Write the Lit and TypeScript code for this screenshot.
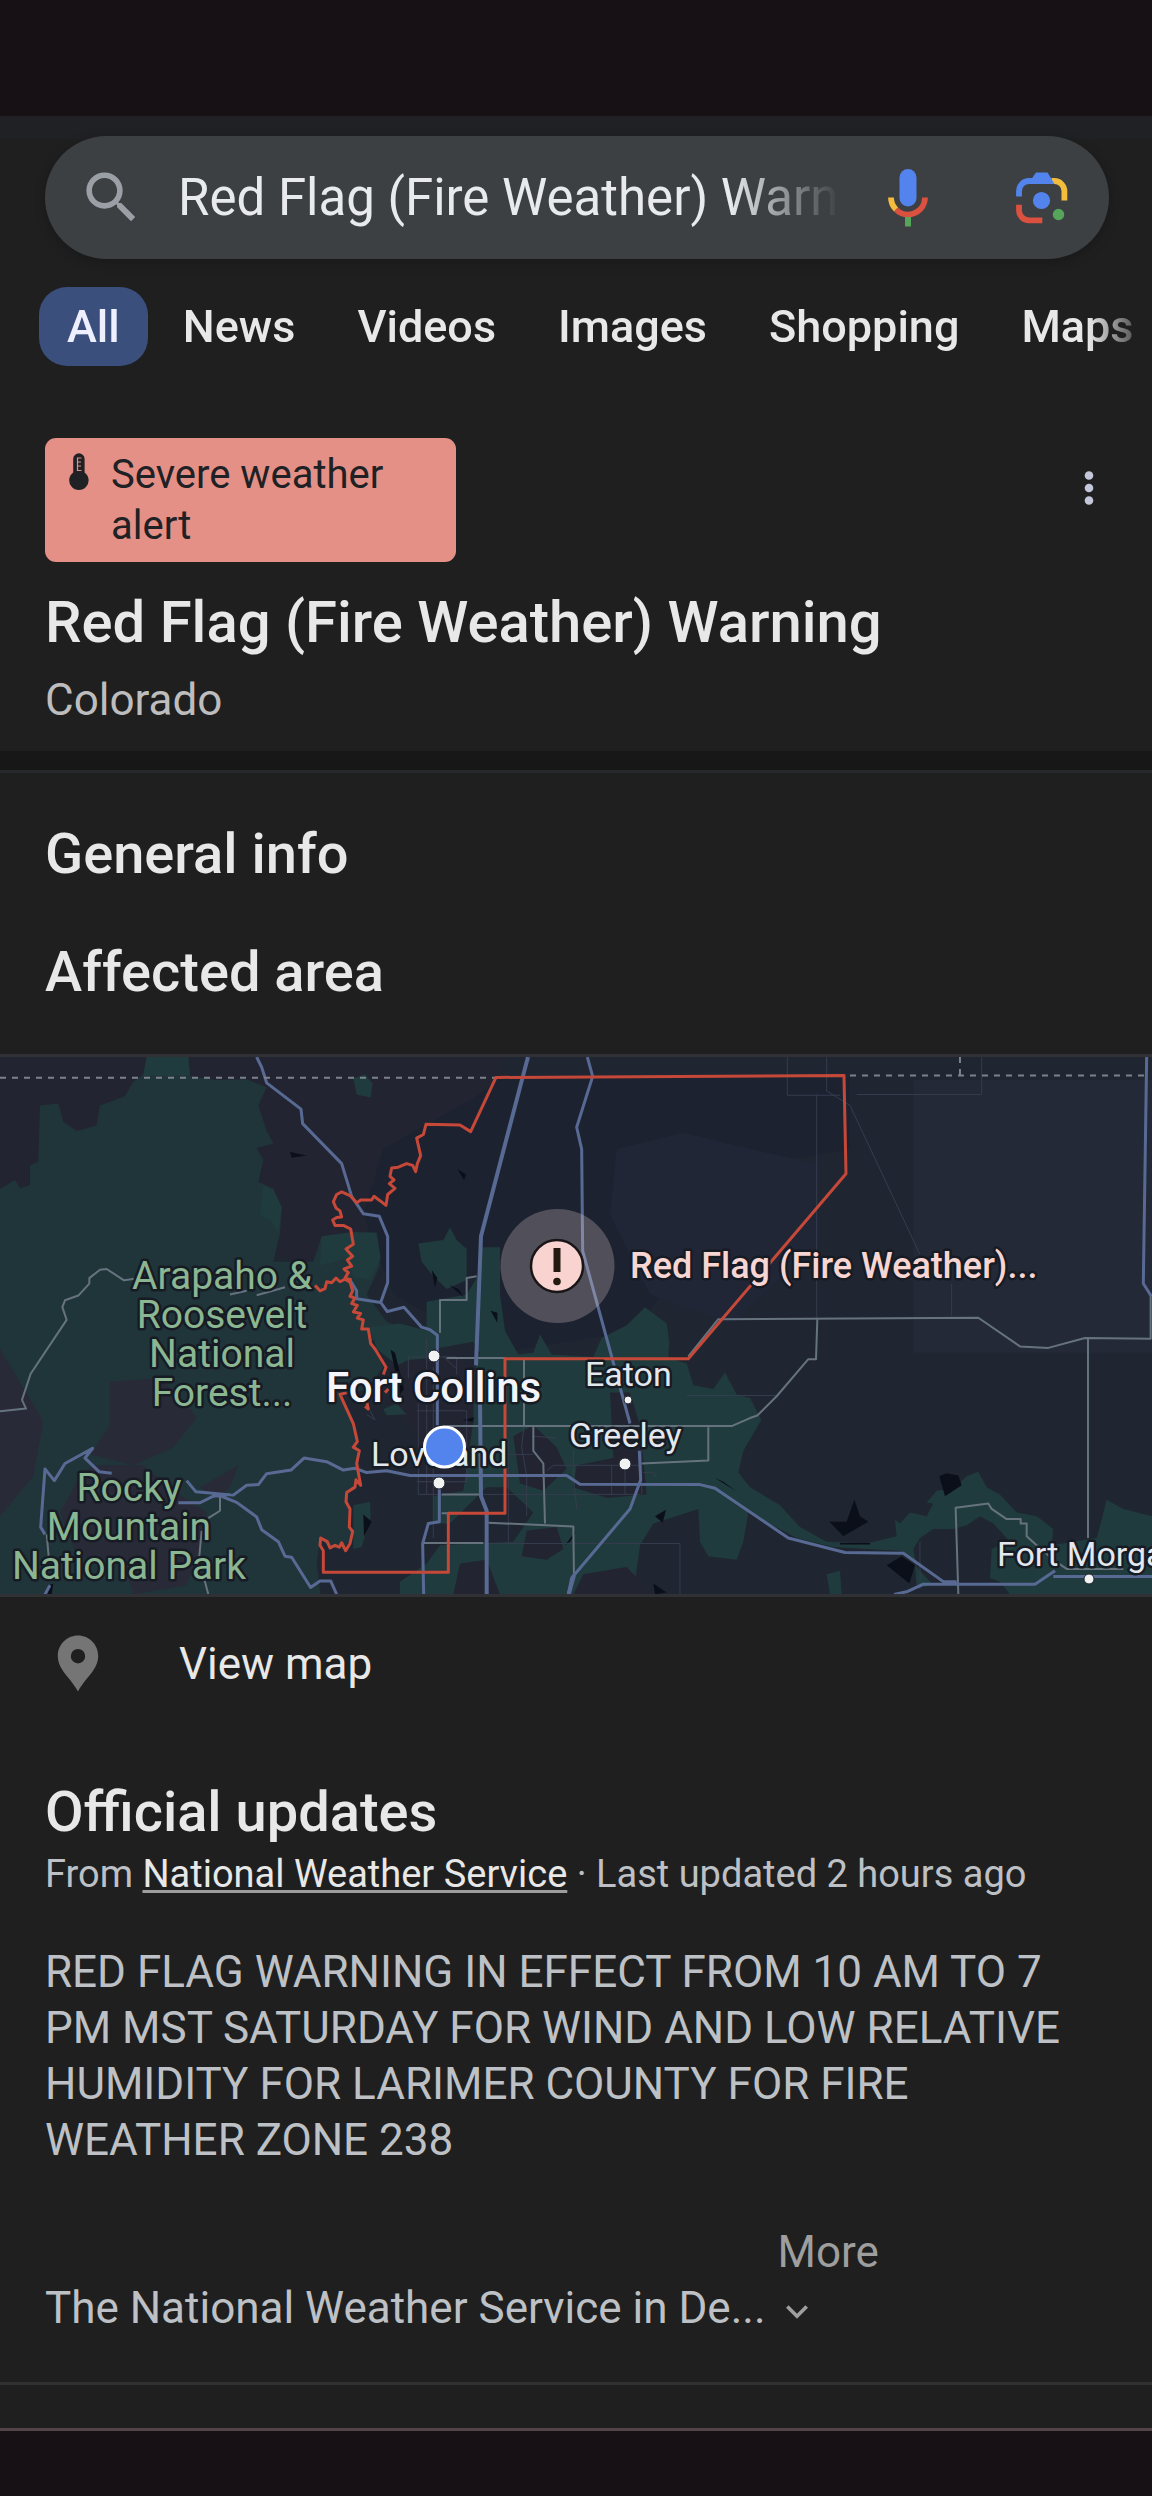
import { LitElement, html, css, svg } from "lit";
import { customElement, state } from "lit/decorators.js";

const TABS = ["All", "News", "Videos", "Images", "Shopping", "Maps"];

@customElement("search-header")
export class SearchHeader extends LitElement {
  static styles = css`
    :host {
      display: block;
      background: linear-gradient(#202124 23px, #1f1f1f 23px);
      padding-top: 20px;
    }
    .pill {
      display: flex;
      align-items: center;
      height: 123px;
      margin: 0 43px 0 45px;
      padding: 0 31px 0 33px;
      box-sizing: border-box;
      border-radius: 62px;
      background: #3c4043;
      box-shadow: 0 3px 12px rgba(0, 0, 0, 0.22);
    }
    .label {
      display: flex;
    }
    .query {
      flex: 1;
      min-width: 0;
      height: 80px;
      margin: 0 32px 0 33px;
      padding: 0;
      border: 0;
      outline: 0;
      background: none;
      color: #e8eaed;
      font: 400 51px Roboto, "Liberation Sans", sans-serif;
      -webkit-mask-image: linear-gradient(to right, #000 calc(100% - 110px), transparent);
      mask-image: linear-gradient(to right, #000 calc(100% - 110px), transparent);
    }
    .icon {
      display: flex;
      align-items: center;
      justify-content: center;
      width: 72px;
      height: 80px;
      padding: 0;
      border: 0;
      background: none;
    }
    .icon + .icon {
      margin-left: 62px;
    }
    .tabs {
      display: flex;
      margin-top: 28px;
      padding-left: 39px;
      overflow: hidden;
      -webkit-mask-image: linear-gradient(to right, #000 calc(100% - 64px), transparent);
      mask-image: linear-gradient(to right, #000 calc(100% - 64px), transparent);
    }
    .tab {
      flex: none;
      padding: 0 31px;
      border-radius: 28px;
      color: #e8e8e8;
      font: 500 45px/79px Roboto, "Liberation Sans", sans-serif;
      text-decoration: none;
    }
    .tab.on {
      margin-right: 4px;
      padding: 0 28px;
      background: #3a4f7b;
      color: #eef0ff;
    }
  `;

  render() {
    return html`
      <form class="pill" role="search" @submit=${(e: Event) => e.preventDefault()}>
        <label class="label" for="q" aria-label="Search">
          <svg width="67" height="67" viewBox="0 0 24 24" fill="#9aa0a6" aria-hidden="true">
            <path
              d="M15.5 14h-.79l-.28-.27A6.47 6.47 0 0 0 16 9.5 6.5 6.5 0 1 0 9.5 16c1.61 0 3.09-.59 4.23-1.57l.27.28v.79l5 4.99L20.49 19l-4.99-5zm-6 0C7.01 14 5 11.99 5 9.5S7.01 5 9.5 5 14 7.01 14 9.5 11.99 14 9.5 14z"
            />
          </svg>
        </label>
        <input class="query" id="q" type="text" value="Red Flag (Fire Weather) Warning" />
        <button class="icon" type="button" aria-label="Search by voice">
          <svg width="40" height="58" viewBox="0 0 40 58" fill="none">
            <rect x="11.5" width="17" height="37.5" rx="8.5" fill="#5384ed" />
            <path d="M3 28.5A17 17 0 0 0 8 40.5" stroke="#f4bc3c" stroke-width="5.8" />
            <path d="M8 40.5A17 17 0 0 0 37 28.5" stroke="#da5140" stroke-width="5.8" />
            <path d="M20 48v9.5" stroke="#57a55b" stroke-width="6" />
          </svg>
        </button>
        <button class="icon" type="button" aria-label="Search by image">
          <svg width="52" height="52" viewBox="0 0 52 52" fill="none" stroke-width="5.8">
            <path d="M35 9h3.4a10 10 0 0 1 10 10v9.4" stroke="#f4bc3c" />
            <path d="M3 24.500V19A10 10 0 0 1 13 9h23" stroke="#5384ed" />
            <path d="M15.500 7 20 .5h11.500L38.500 11.900H30Z" fill="#5384ed" />
            <path d="M3 32.700V38.300a10 10 0 0 0 10 10h13.300" stroke="#da5140" />
            <circle cx="25.500" cy="28.500" r="8.600" fill="#5384ed" />
            <circle cx="42.500" cy="42.500" r="5.700" fill="#57a55b" />
          </svg>
        </button>
      </form>
      <nav class="tabs" aria-label="Result types">
        ${TABS.map((t, i) => html`<a class="tab ${i ? "" : "on"}" href="#${t.toLowerCase()}">${t}</a>`)}
      </nav>
    `;
  }
}

/** Places drawn with a dot: name, label x, label baseline, dot x, dot y, dot radius. */
const TOWNS: [string, number, number, number, number, number][] = [
  ["Eaton", 585, 329, 628, 343, 4],
  ["Greeley", 569, 390, 625, 407, 6],
  ["Fort Morgan", 997, 509, 1089, 522, 5],
  ["Loveland", 371, 409, 439, 426, 6],
];

/** Parks: centre x, first baseline, lines of the name. */
const PARKS: [number, number, string[]][] = [
  [222, 232, ["Arapaho &", "Roosevelt", "National", "Forest..."]],
  [129, 444, ["Rocky", "Mountain", "National Park"]],
];

@customElement("area-map")
export class AreaMap extends LitElement {
  static styles = css`
    :host {
      display: block;
      border-top: 3px solid #303134;
      border-bottom: 3px solid #303134;
    }
    .map {
      display: block;
      width: 100%;
      height: auto;
      font-family: Roboto, "Liberation Sans", sans-serif;
    }
    .base { fill: #1f2631; }
    .plain { fill: #222531; }
    .forest { fill: #20353a; }
    .green { fill: #203b3d; }
    .dusk { fill: #282a37; }
    .night { fill: #1c2230; }
    .slate { fill: #202636; }
    .east { fill: #232936; }
    .lake { fill: #0b0f19; }
    .line {
      fill: none;
      vector-effect: non-scaling-stroke;
      stroke-linejoin: round;
    }
    .highway { stroke: #586a94; stroke-width: 3px; }
    .wide { stroke-width: 4px; }
    .road { stroke: #66737f; stroke-width: 2px; }
    .street { stroke: #353c4e; stroke-width: 1px; }
    .border { stroke: #7b828c; stroke-width: 2px; stroke-dasharray: 6px 6px; }
    .warning { stroke: #c64838; stroke-width: 3px; }
    .label {
      paint-order: stroke;
      stroke: #171b24;
      stroke-width: 5px;
      stroke-linejoin: round;
    }
    .park { fill: #8ab692; font-size: 39px; text-anchor: middle; }
    .town { fill: #e3e7ee; font-size: 34px; }
    .city { fill: #f3f5fb; font-size: 42px; font-weight: 500; }
    .alert { fill: #f6d5d3; font-size: 36px; font-weight: 500; }
  `;

  private land() {
    return svg`
      <path class="plain" d="M0 47H1500V300L1200 480 900 620 780 560 760 300 0 420Z" />
      <path class="night" d="M1150 300 1420 160 1500 105 2550 105V300L2300 340 1900 800 1500 860 1180 700 1090 480Z" />
      <path class="slate" d="M1850 300 2050 255 2250 300 2450 340 2450 560 2200 780 1950 700 1830 480Z" />
      <path class="east" d="M2740 110H3456V860H2740Z" />
      <path class="forest" d="M0 410 45 385 60 408 90 400V345L115 335 120 180 175 175 190 225 230 250 290 235 300 180 375 155 400 115 430 95 440 47H565L570 100 650 110 740 108 800 130 775 180 800 250 820 285 770 297 790 330 775 390 820 410 845 460 840 530 820 610 940 610 965 540 1060 530 1130 530 1140 620 1100 700 1160 775 1200 790 1110 830 1150 900 1100 960 1020 980 1060 1060 1080 1180 1080 1215 1045 1240 1045 1300 1055 1370 1030 1400 985 1395 960 1370 950 1440 962 1530H0Z" />
      <path class="green" d="M440 47H565L570 98 430 98ZM1060 105 1095 95 1118 120 1112 158 1070 150ZM790 400 820 410 845 460 835 530 815 500 780 480ZM965 540 1060 528 1130 530 1142 600 1110 660 1060 650 1040 600 960 620ZM1060 1280 1110 1270 1112 1310 1085 1395 1060 1400Z" />
      <path class="dusk" d="M330 940 480 930 560 1000 590 1040 520 1120 400 1170 270 1140 330 1060ZM280 1170 430 1170 540 1250 620 1300 600 1400 560 1500 400 1525 370 1440 230 1420 180 1300 240 1200ZM0 850 60 940 130 1050 100 1200 0 1310ZM600 1230 715 1170 690 1230 650 1262Z" />
      <g transform="translate(900 0)">
        <path class="green" d="M355 560 430 550 450 515 470 550 500 575 500 660 440 685 400 650 365 610ZM380 720 500 700 540 640 545 570 600 570 600 700 615 800 655 865 700 860 720 810 755 865 880 872 905 820 980 785 1035 735 1100 780 1108 830 1105 875 1160 890 1180 950 1240 960 1275 915 1310 975 1350 985 1384 1045 1330 1130 1315 1190 1350 1230 1440 1280 1500 1340 1580 1380 1700 1385 1790 1365 1785 1320 1800 1330 1830 1300 1880 1310 1900 1275 1880 1272 1910 1240 1960 1235 2000 1200 2035 1188 2060 1230 2100 1250 2150 1300 2210 1310 2260 1345 2255 1390 2390 1370 2405 1320 2420 1265 2470 1290 2556 1310V1525H2130L2100 1490 2070 1480 2075 1400 2110 1385 2130 1380 2080 1330 2040 1310 2000 1335 1960 1345 1900 1345 1860 1370 1840 1400 1850 1450 1900 1500 1850 1508 1845 1440 1800 1405 1700 1400 1600 1395 1490 1370 1345 1300 1330 1380 1310 1430 1225 1420 1200 1380 1195 1290 1060 1330 1020 1390 1000 1525H300L300 1490 380 1440 420 1390 640 1380 700 1300 620 1230 560 1230 450 1330 400 1330 400 1240 520 1060 520 920 540 860 520 830 400 850 380 880 300 900 230 850 210 790 300 780 380 800Z" />
        <path class="plain" d="M325 880 470 870 520 900 520 1050 490 1240 370 1260 350 1080 260 1000 260 910ZM640 1090 700 1060 770 1120 800 1180 730 1240 660 1220ZM930 970 990 970 1020 1060 1040 1250 920 1260 820 1230 830 1170 940 1150ZM680 1350 770 1340 790 1400 740 1430 665 1420ZM480 1440 560 1430 600 1525H460ZM850 1470 980 1450 1060 1525H820Z" />
        <path class="lake" d="M472 355 498 370 492 385ZM395 632 412 655 405 680ZM450 675 475 685 492 708ZM572 745 592 750 592 778ZM272 852 285 860 312 960 300 975ZM190 1305 215 1325 192 1365ZM488 1045 522 1038 518 1050ZM1065 1310 1098 1292 1088 1328ZM1245 1205 1270 1215 1310 1242ZM795 1390 828 1350 812 1378ZM1060 1495 1100 1520 1065 1525ZM-30 308 20 318-25 324Z" />
        <path class="lake" d="M1588 1325 1640 1325 1663 1265 1680 1310 1705 1325 1630 1365ZM1620 1384H1710V1388H1620ZM1760 1445 1805 1420 1845 1445 1828 1495ZM1918 1200 1940 1192 1975 1198 1985 1225 1935 1255Z" />
        <path class="green" d="M1580 1470 1620 1460 1625 1525H1590ZM250 1015 290 1000 320 1030 260 1032Z" />
        <path class="lake" d="M-752 1500-740 1495-745 1525H-758Z" />
      </g>`;
  }

  private roads() {
    return svg`
      <path class="line street" d="M2362 47V152H2520M2480 47V140L2550 180 2760 590M2450 150V770M2570 150H2945V47M2855 670V760M2760 1380V1510M2060 978H2330" />
      <g transform="translate(900 0)">
        <path class="line street" d="M325 930V872H470V920M380 820V1250M355 1000V1250H1020M430 870 470 905M350 1020H500V1215H350M672 880V1060L665 1120 680 1200V1310M740 1185 760 1170H1020M935 1250V1170M975 1180V1250M1025 1120V1250M820 1130V1200L830 1290M600 1140H700M1030 1190H1060L1070 1205M550 1385H1140V1525M355 1215H500M400 900V1370M625 1100V1380M700 1090 770 1095M210 1020 225 1045 200 1030" />
        <path class="line road" d="M420 805V715H500V655L530 650M440 875H615M672 880V1060M440 1062H1295L1350 1040 1372 1033 1430 980 1525 878H1548L1552 768M700 1062V1130L730 1165 735 1330M1025 1165 1225 1157V1065M425 1250H540M425 1302H450M565 1328 820 1338 822 1480M370 1384H550M1165 870 1255 768 2035 764 2160 843 2245 847 2355 820 2552 822V700M2364 820V1370M1975 1525 1967 1287 2065 1275 2075 1290 2120 1318 2162 1318V1330H2180V1365L2210 1390 2260 1430 2300 1455H2470" />
      </g>
      <path class="line road" d="M0 1021 78 1014 66 990 92 918 200 770 187 735 195 716 235 703 268 670V655L300 632 320 630 372 661 410 656M690 700 740 690M770 702 855 680M140 1360 150 1460M605 1350 598 1420M612 1480 625 1525M660 1255V1295L625 1315" />
      <path class="line highway" d="M770 47 785 75 800 118 903 190 908 230 1025 340 1055 430 1090 478 1138 485 1163 540V668L1142 722 1162 747 1212 735 1265 790 1290 797 1312 812V1060M1050 660 1070 690V712L1142 722" />
      <path class="line highway" d="M135 1525 150 1500M135 1360 122 1340 135 1180 163 1212 195 1165 278 1123 255 1150 298 1188 335 1192M535 1273H600L640 1255 690 1250M560 1212 588 1243 700 1252 740 1225 775 1223 800 1193 873 1183 912 1150 980 1160 1030 1183 1065 1178 1100 1190 1160 1185 1230 1198H1700L1740 1222 2100 1223 2145 1233 2365 1370 2535 1410 2710 1412 2830 1490H2870M655 1252 710 1272 770 1312 785 1347 835 1380 855 1420 875 1423 932 1506 960 1488H992L1010 1525" />
      <path class="line highway wide" d="M1584 47 1560 130 1443 540 1428 895M1440 995 1443 1255 1460 1295V1525" />
      <path class="line highway" d="M1762 47 1778 100 1730 240 1745 300 1748 580 1890 1055M1918 1130 1922 1210 1890 1290 1715 1480 1705 1525M1318 1230V1325L1285 1330 1268 1385 1271 1525M2682 1525 2720 1518 2770 1497H3105L3165 1460M3160 1476H3456M3440 47 3430 670 3454 705" />
      <path class="line highway wide" d="M1722 1472 1706 1525" />
      <path class="line border" d="M0 104H1490M2550 98H3440M2880 47V98" />`;
  }

  render() {
    return html`
      <svg class="map" viewBox="0 0 1152 537" role="img" aria-label="Affected area map">
        <rect class="base" width="1152" height="537" />
        <g transform="translate(0 -17) scale(.33333 .36352)">
          ${this.land()} ${this.roads()}
          <g transform="translate(900 0)">
            <path
              class="line warning"
              d="M45 675 60 690 75 684 80 665 95 668 108 655 120 665 135 658 150 666M155 660 135 655 145 640 132 630 155 622 142 605 158 595 138 575 160 562 152 520 130 510 105 510 98 495 110 488 125 487 120 470 108 462 100 445 110 425 125 418 150 428 170 448 182 440 215 440 222 430 240 442 258 455 263 425 285 408 268 395 282 385 270 375 275 352 295 350 320 340 338 345 347 362 352 340 362 318 350 270 370 260 378 232 480 234 512 252 588 103 1632 98 1638 368 1165 877H615V1302H445V1464H70V1405L60 1390 62 1370 82 1380 90 1397 105 1390 118 1395 125 1383 137 1405 150 1385 158 1352 148 1340 150 1290 138 1270 140 1245 165 1230 168 1210 182 1225 170 1165 178 1130 160 1120 172 1105 160 1055 120 975 140 970M200 950 190 940M200 995 205 1015 195 1008M255 970 265 960M250 920 258 900 225 850 212 835 205 795 185 795 190 770 172 765 182 752 160 748 172 730 155 725 165 710 150 705 158 690 150 665"
            />
          </g>
        </g>

        ${PARKS.map(([x, y, lines]) =>
          lines.map((t, i) => svg`<text class="label park" x=${x} y=${y + i * 39}>${t}</text>`)
        )}
        ${TOWNS.map(
          ([name, x, y, cx, cy, r]) => svg`
            <text class="label town" x=${x} y=${y}>${name}</text>
            <circle cx=${cx} cy=${cy} r=${r} fill="#f1f2f2" stroke="#20242e" />`
        )}
        <text class="label city" x="326" y="345">Fort Collins</text>
        <circle cx="434" cy="299" r="6" fill="#f1f2f2" stroke="#20242e" />
        <circle cx="444.500" cy="390" r="20" fill="#5384ed" stroke="#fff" stroke-width="3" />

        <circle cx="557.500" cy="209" r="57" fill="#fbe0e0" fill-opacity=".24" />
        <circle cx="557" cy="209" r="26" fill="#f8d3d0" stroke="#1a1618" stroke-width="2.500" />
        <path d="M553.500 191h7v24h-7z" fill="#241a10" />
        <circle cx="557" cy="224.500" r="3.800" fill="#241a10" />
        <text class="label alert" x="630" y="221">Red Flag (Fire Weather)...</text>
      </svg>
    `;
  }
}

@customElement("app-root")
export class AppRoot extends LitElement {
  static styles = css`
    :host {
      display: flex;
      flex-direction: column;
      min-height: 100vh;
      background: #1f1f1f;
      color: #e8e8e8;
      font-family: Roboto, "Liberation Sans", sans-serif;
    }
    .status {
      height: 116px;
      background: #171115;
    }
    .footer {
      flex: 1;
      min-height: 64px;
      border-top: 3px solid #524348;
      background: #171115;
      box-sizing: border-box;
    }
    h1,
    h2,
    p {
      margin: 0;
      font-weight: 400;
    }
    .summary {
      padding: 72px 45px 23px;
    }
    .row {
      display: flex;
      align-items: flex-start;
      justify-content: space-between;
    }
    .badge {
      display: flex;
      align-items: flex-start;
      gap: 22px;
      max-width: 411px;
      box-sizing: border-box;
      padding: 11px 24px;
      border-radius: 11px;
      background: #e49086;
      color: #202124;
      font-size: 40px;
      line-height: 51px;
    }
    .badge svg {
      flex: none;
      margin-top: 4px;
    }
    .badge span {
      flex: 1;
    }
    .dots {
      display: flex;
      justify-content: center;
      width: 36px;
      margin-top: 32px;
      padding: 0;
      border: 0;
      background: none;
    }
    .title {
      margin-top: 28px;
      font-size: 58px;
      font-weight: 500;
      line-height: 64px;
    }
    .place {
      margin-top: 18px;
      color: #bdbdbd;
      font-size: 44px;
      line-height: 56px;
    }
    .band {
      height: 19px;
      background: #171717;
      border-bottom: 3px solid #27282b;
    }
    .info {
      display: flex;
      flex-direction: column;
      gap: 54px;
      padding: 49px 45px 50px;
    }
    .heading {
      font-size: 56px;
      font-weight: 500;
      line-height: 64px;
    }
    .view {
      display: flex;
      align-items: center;
      gap: 80px;
      padding: 38px 57px 0;
      color: #e8e8e8;
      font-size: 44px;
      line-height: 56px;
      text-decoration: none;
    }
    .updates {
      padding: 88px 45px 46px;
      color: #bdc1c6;
      border-bottom: 3px solid #303031;
      margin-bottom: 43px;
    }
    .updates .heading {
      color: #e8e8e8;
    }
    .source {
      margin-top: 4px;
      font-size: 38px;
      line-height: 52px;
    }
    .source a {
      color: #e8e8e8;
      text-decoration: underline 3px #9e9e9e;
      text-underline-offset: 3px;
      text-decoration-skip-ink: none;
    }
    .body {
      margin-top: 44px;
      font-size: 44px;
      line-height: 56px;
    }
    .tail {
      display: flex;
      align-items: flex-end;
      gap: 12px;
      margin-top: 56px;
      font-size: 44px;
      line-height: 56px;
    }
    .more {
      display: flex;
      flex-direction: column;
      align-items: flex-start;
      padding: 0;
      border: 0;
      background: none;
      color: #9e9e9e;
      font: inherit;
    }
    .chevron {
      display: flex;
      align-items: center;
      height: 56px;
      padding: 8px 0 0 9px;
      box-sizing: border-box;
    }
  `;

  @state() private open = false;

  render() {
    return html`
      <div class="status"></div>
      <search-header></search-header>

      <section class="summary">
        <div class="row">
          <div class="badge">
            <svg width="20" height="38" viewBox="0 0 20 38" aria-hidden="true">
              <path d="M4.200 6a5.700 5.700 0 0 1 11.400 0v13.500a9.700 9.700 0 1 1-11.400 0Z" fill="#202124" />
              <path d="M12.500 5H8.500V17.500H12.500M8.500 9H12M8.500 13H12" fill="none" stroke="#e49086" stroke-width="1.200" />
            </svg>
            <span>Severe weather alert</span>
          </div>
          <button class="dots" aria-label="More options">
            <svg width="10" height="36" viewBox="0 0 10 36" fill="#c4c6d9">
              <circle cx="5" cy="5.500" r="4.300" />
              <circle cx="5" cy="18" r="4.300" />
              <circle cx="5" cy="30.500" r="4.300" />
            </svg>
          </button>
        </div>
        <h1 class="title">Red Flag (Fire Weather) Warning</h1>
        <p class="place">Colorado</p>
      </section>
      <div class="band"></div>

      <section class="info">
        <h2 class="heading">General info</h2>
        <h2 class="heading">Affected area</h2>
      </section>
      <area-map></area-map>
      <a class="view" href="#map">
        <svg width="42" height="57" viewBox="0 0 42 57" aria-hidden="true">
          <path
            fill="#757575"
            fill-rule="evenodd"
            d="M21 .5C9.700.5.800 9.600.800 21 .800 35 14 43 21 56.500 28 43 41.200 35 41.200 21 41.200 9.600 32.300.5 21 .5ZM21 14a7.200 7.200 0 1 1 0 14.400 7.200 7.200 0 0 1 0-14.400Z"
          />
        </svg>
        <span>View map</span>
      </a>

      <section class="updates">
        <h2 class="heading">Official updates</h2>
        <p class="source">From <a href="#nws">National Weather Service</a> · Last updated 2 hours ago</p>
        <p class="body">
          RED FLAG WARNING IN EFFECT FROM 10 AM TO 7 PM MST SATURDAY FOR WIND AND LOW RELATIVE HUMIDITY FOR
          LARIMER COUNTY FOR FIRE WEATHER ZONE 238
        </p>
        <div class="tail">
          <span>The National Weather Service in De...</span>
          <button class="more" aria-expanded=${this.open} @click=${() => (this.open = !this.open)}>
            <span>More</span>
            <span class="chevron">
              <svg width="22" height="14" viewBox="0 0 22 14" fill="none" stroke="#9e9e9e" stroke-width="3.600">
                <path d="M1.300 1.500 11 11.200 20.700 1.500" />
              </svg>
            </span>
          </button>
        </div>
      </section>
      <div class="footer"></div>
    `;
  }
}
